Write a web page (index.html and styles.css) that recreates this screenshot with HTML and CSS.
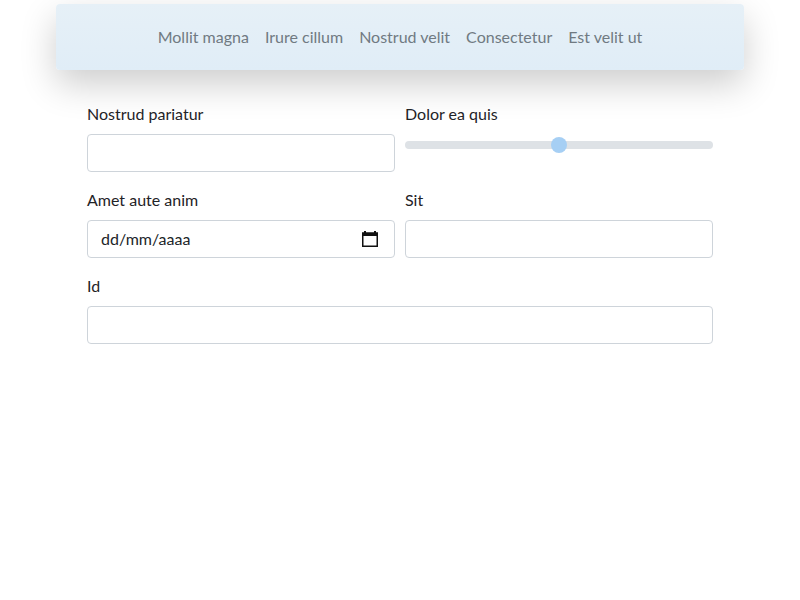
FILE: index.html
```html
<!DOCTYPE html>
<html lang="es">
<head>
<meta charset="utf-8">
<title>Form</title>
<link rel="stylesheet" href="styles.css">
</head>
<body>
<header class="navbar">
  <nav class="nav">
    <a class="nav-link" href="#">Mollit magna</a>
    <a class="nav-link" href="#">Irure cillum</a>
    <a class="nav-link" href="#">Nostrud velit</a>
    <a class="nav-link" href="#">Consectetur</a>
    <a class="nav-link" href="#">Est velit ut</a>
  </nav>
</header>
<main class="container">
  <form class="form-grid">
    <div class="field">
      <label class="label" for="f1">Nostrud pariatur</label>
      <input class="input" id="f1" type="text">
    </div>
    <div class="field">
      <label class="label" for="f2">Dolor ea quis</label>
      <input class="range" id="f2" type="range" min="0" max="100" value="50">
    </div>
    <div class="field">
      <label class="label" for="f3">Amet aute anim</label>
      <div class="input date">
        <span class="date-text">dd/mm/aaaa</span>
        <svg class="cal" width="18" height="18" viewBox="0 0 18 18" aria-hidden="true">
          <rect x="3" y="1" width="2" height="3" fill="#111"/>
          <rect x="13" y="1" width="2" height="3" fill="#111"/>
          <rect x="1.75" y="3.25" width="14.5" height="13" fill="none" stroke="#111" stroke-width="1.5"/>
          <rect x="1" y="2.5" width="16" height="3.5" fill="#111"/>
        </svg>
      </div>
    </div>
    <div class="field">
      <label class="label" for="f4">Sit</label>
      <input class="input" id="f4" type="text">
    </div>
    <div class="field full">
      <label class="label" for="f5">Id</label>
      <input class="input" id="f5" type="text">
    </div>
  </form>
</main>
</body>
</html>
```
FILE: styles.css
```css
* { box-sizing: border-box; }
html, body { margin: 0; padding: 0; background: #fff; }
body {
  font-family: "Lato", "Open Sans", "Liberation Sans", sans-serif;
  font-size: 16px;
  line-height: 24px;
  color: #212529;
}
.navbar {
  width: 688px;
  height: 66px;
  margin: 4px auto 0;
  border-radius: 4px;
  background: linear-gradient(#e6f0f7, #e0edf7);
  box-shadow: 0 14px 36px rgba(0,0,0,0.2);
  display: flex;
  align-items: center;
  justify-content: center;
}
.nav { display: flex; }
.nav-link {
  color: #707a82;
  text-decoration: none;
  padding: 8px 8px;
}
.container {
  width: 626px;
  margin: 32px auto 0;
}
.form-grid {
  display: grid;
  grid-template-columns: 1fr 1fr;
  column-gap: 10px;
  row-gap: 16px;
}
.field { display: flex; flex-direction: column; }
.full { grid-column: 1 / 3; }
.label { display: block; margin-bottom: 8px; color: #1f2327; }
.input {
  height: 38px;
  border: 1px solid #ced4da;
  border-radius: 4px;
  background: #fff;
  font: inherit;
  padding: 6px 12px;
  width: 100%;
}
.date {
  display: flex;
  align-items: center;
  justify-content: space-between;
  padding: 6px 15px 6px 13px;
}
.date-text { color: #212529; }
.cal { display: block; }
.range {
  -webkit-appearance: none;
  appearance: none;
  width: 100%;
  height: 22px;
  margin: 0;
  padding: 0;
  background: transparent;
}
.range::-webkit-slider-runnable-track {
  height: 8px;
  border-radius: 4px;
  background: #dee2e6;
}
.range::-webkit-slider-thumb {
  -webkit-appearance: none;
  appearance: none;
  width: 16px;
  height: 16px;
  margin-top: -4px;
  border-radius: 50%;
  background: #a6cff4;
  border: 0;
}
```
